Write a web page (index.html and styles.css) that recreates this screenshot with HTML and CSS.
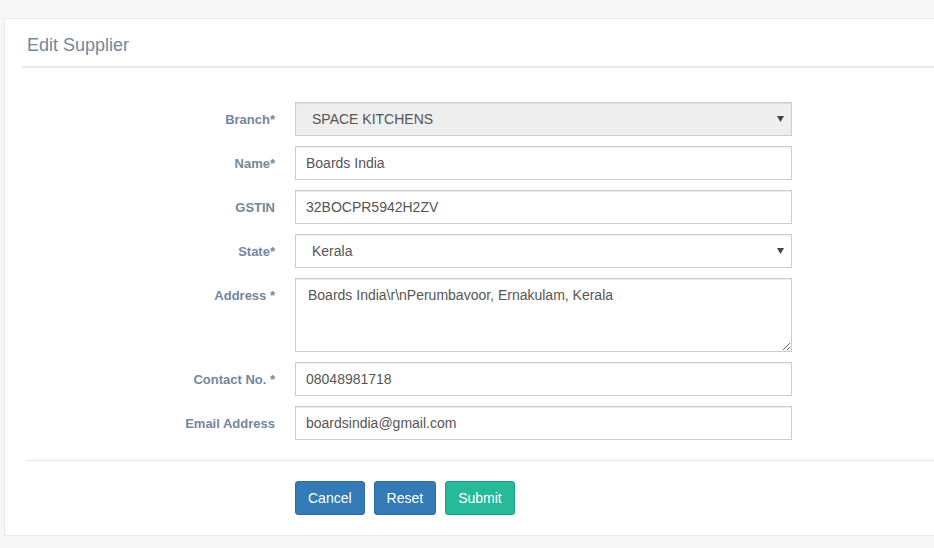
FILE: index.html
```html
<!DOCTYPE html>
<html>
<head>
<meta charset="utf-8">
<link rel="stylesheet" href="styles.css">
</head>
<body>
<div class="panel">
  <div class="panel-title"><h2>Edit Supplier</h2></div>
  <form class="form">
    <div class="row">
      <label class="lbl">Branch*</label>
      <div class="field select-wrap">
        <select class="ctrl sel disabled" disabled><option>SPACE KITCHENS</option></select>
        <svg class="caret" width="7" height="6" viewBox="0 0 7 6"><path d="M0 0H7L3.5 6Z" fill="#444"/></svg>
      </div>
    </div>
    <div class="row">
      <label class="lbl">Name*</label>
      <div class="field"><input class="ctrl" type="text" value="Boards India"></div>
    </div>
    <div class="row">
      <label class="lbl">GSTIN</label>
      <div class="field"><input class="ctrl" type="text" value="32BOCPR5942H2ZV"></div>
    </div>
    <div class="row">
      <label class="lbl">State*</label>
      <div class="field select-wrap">
        <select class="ctrl sel"><option>Kerala</option></select>
        <svg class="caret" width="7" height="6" viewBox="0 0 7 6"><path d="M0 0H7L3.5 6Z" fill="#444"/></svg>
      </div>
    </div>
    <div class="row">
      <label class="lbl">Address *</label>
      <div class="field"><textarea class="ctrl area">Boards India\r\nPerumbavoor, Ernakulam, Kerala</textarea></div>
    </div>
    <div class="row">
      <label class="lbl">Contact No. *</label>
      <div class="field"><input class="ctrl" type="text" value="08048981718"></div>
    </div>
    <div class="row">
      <label class="lbl">Email Address</label>
      <div class="field"><input class="ctrl" type="text" value="boardsindia@gmail.com"></div>
    </div>
    <div class="sep"></div>
    <div class="actions">
      <button type="button" class="btn btn-primary">Cancel</button>
      <button type="button" class="btn btn-primary">Reset</button>
      <button type="button" class="btn btn-success">Submit</button>
    </div>
  </form>
</div>
</body>
</html>
```
FILE: styles.css
```css
html, body {
  margin: 0;
  padding: 0;
  background: #F7F7F7;
  overflow: hidden;
  font-family: "Liberation Sans", Arial, sans-serif;
}
body {
  width: 934px;
  height: 548px;
}
.panel {
  margin: 18px -20px 0 4px;
  background: #fff;
  border: 1px solid #E6E9ED;
  padding: 10px 17px;
}
.panel-title {
  border-bottom: 2px solid #E6E9ED;
  padding: 1px 5px 6px;
  margin-bottom: 10px;
}
.panel-title h2 {
  margin: 0;
  font-size: 18px;
  font-weight: 400;
  line-height: 30px;
  color: #73879C;
}
.form {
  padding-top: 24px;
}
.row {
  display: grid;
  grid-template-columns: 253px 497px;
  column-gap: 20px;
  margin-bottom: 10px;
}
.lbl {
  text-align: right;
  font-size: 13px;
  font-weight: 700;
  color: #73879C;
  padding-top: 10px;
  line-height: 16px;
}
.field {
  position: relative;
}
.ctrl {
  display: block;
  box-sizing: border-box;
  width: 497px;
  height: 34px;
  margin: 0;
  padding: 6px 10px;
  border: 1px solid #ccc;
  border-radius: 0;
  background: #fff;
  box-shadow: inset 0 1px 1px rgba(0,0,0,.075);
  font-family: "Liberation Sans", Arial, sans-serif;
  font-size: 14px;
  line-height: 20px;
  color: #555;
  outline: none;
}
.sel {
  -webkit-appearance: none;
  appearance: none;
  padding-left: 16px;
  opacity: 1;
}
.sel.disabled {
  background: #eee;
  color: #555;
}
.caret {
  position: absolute;
  right: 8px;
  top: 14px;
  pointer-events: none;
}
.area {
  height: 74px;
  padding: 6px 12px;
  resize: both;
}
.sep {
  margin: 20px 0 0 4px;
  border-top: 1px solid #e5e5e5;
}
.actions {
  display: flex;
  gap: 9px;
  margin: 20px 0 10px 273px;
}
.btn {
  height: 34px;
  padding: 6px 12px;
  border-radius: 3px;
  font-family: "Liberation Sans", Arial, sans-serif;
  font-size: 14px;
  line-height: 20px;
  color: #fff;
  border: 1px solid transparent;
  cursor: pointer;
}
.btn-primary {
  background: #337ab7;
  border-color: #2e6da4;
}
.btn-success {
  background: #26B99A;
  border-color: #169F85;
}
```
